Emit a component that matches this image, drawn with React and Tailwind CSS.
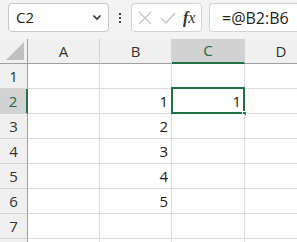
import React from "react";

const font = { fontFamily: '"Open Sans", "Liberation Sans", sans-serif' };

function Row({ n, b, c, selected }) {
  return (
    <div className="flex h-[25px]">
      <div
        className={
          "w-[28px] shrink-0 flex items-center justify-center text-[15px] border-b border-[#d4d4d4] " +
          (selected
            ? "bg-[#d2d2d2] text-[#1e6b3e] border-r-2 border-r-[#217346]"
            : "bg-[#f0f0f0] text-[#333] border-r border-r-[#9f9f9f]")
        }
      >
        {n}
      </div>
      <div className="w-[72px] shrink-0 border-r border-b border-[#dadada] bg-white" />
      <div className="w-[72px] shrink-0 border-r border-b border-[#dadada] bg-white flex items-center justify-end pr-[3px] text-[15px] text-[#222]">
        {b}
      </div>
      <div className="w-[73px] shrink-0 border-r border-b border-[#dadada] bg-white relative flex items-center justify-end pr-[3px] text-[15px] text-[#222]">
        {selected && (
          <>
            <div className="absolute left-[-1px] top-[-2px] w-[74px] h-[27px] border-2 border-[#217346]" />
            <div className="absolute right-[-3px] bottom-[-3px] w-[5px] h-[5px] bg-[#217346] border border-white" />
          </>
        )}
        <span className="relative">{c}</span>
      </div>
      <div className="w-[72px] shrink-0 border-b border-r border-[#dadada] bg-white" />
    </div>
  );
}

export default function App() {
  return (
    <div className="w-[297px] h-[242px] overflow-hidden bg-white" style={font}>
      <div className="h-[39px] bg-[#f3f3f3] flex items-start pt-[3px]">
        <div className="ml-[8px] w-[101px] h-[29px] bg-white border border-[#c9c9c9] rounded-[4px] flex items-center pl-[7px] pr-[6px] text-[15px] text-[#222]">
          <span className="flex-1">C2</span>
          <svg width="10" height="7" viewBox="0 0 10 7">
            <path d="M1.5 1.5 L5 5 L8.5 1.5" stroke="#333" strokeWidth="1.6" fill="none" />
          </svg>
        </div>
        <div className="w-[22px] h-[29px] flex flex-col items-center justify-center gap-[2px]">
          <div className="w-[2px] h-[2px] bg-[#444]" />
          <div className="w-[2px] h-[2px] bg-[#444]" />
          <div className="w-[2px] h-[2px] bg-[#444]" />
        </div>
        <div className="w-[71px] h-[29px] bg-white border border-[#d4d4d4] rounded-[4px] flex items-center pl-[5px]">
          <svg width="16" height="16" viewBox="0 0 16 16">
            <path d="M2 2 L14 14 M14 2 L2 14" stroke="#c4c4c4" strokeWidth="1.3" fill="none" />
          </svg>
          <svg width="18" height="16" viewBox="0 0 18 16" className="ml-[6px]">
            <path d="M2 8 L7 13 L16 3" stroke="#c4c4c4" strokeWidth="1.3" fill="none" />
          </svg>
          <span
            className="ml-[6px] text-[16px] italic text-[#333] leading-none"
            style={{ fontFamily: '"Liberation Serif", serif' }}
          >
            <span className="font-bold">f</span>x
          </span>
        </div>
        <div className="ml-[7px] flex-1 h-[29px] bg-white border border-[#d4d4d4] rounded-l-[4px] border-r-0 flex items-center pl-[12px] text-[16px] text-[#222]">
          =@B2:B6
        </div>
      </div>
      <div className="flex h-[25px]">
        <div className="w-[28px] shrink-0 bg-[#f0f0f0] border-r border-b border-[#9f9f9f] relative">
          <svg width="18" height="18" viewBox="0 0 18 18" className="absolute right-[3px] bottom-[3px]">
            <path d="M18 0 L18 18 L0 18 Z" fill="#c0c0c0" />
          </svg>
        </div>
        <div className="w-[72px] shrink-0 bg-[#f0f0f0] border-r border-[#d4d4d4] border-b border-b-[#9f9f9f] flex items-center justify-center text-[15px] text-[#333]">
          A
        </div>
        <div className="w-[72px] shrink-0 bg-[#f0f0f0] border-r border-[#d4d4d4] border-b border-b-[#9f9f9f] flex items-center justify-center text-[15px] text-[#333]">
          B
        </div>
        <div className="w-[73px] shrink-0 bg-[#d2d2d2] border-r border-[#d4d4d4] border-b-2 border-b-[#217346] flex items-center justify-center text-[15px] text-[#1e6b3e]">
          C
        </div>
        <div className="w-[72px] shrink-0 bg-[#f0f0f0] border-b border-b-[#9f9f9f] flex items-center justify-center text-[15px] text-[#333]">
          D
        </div>
      </div>
      <Row n="1" b="" c="" />
      <Row n="2" b="1" c="1" selected />
      <Row n="3" b="2" c="" />
      <Row n="4" b="3" c="" />
      <Row n="5" b="4" c="" />
      <Row n="6" b="5" c="" />
      <Row n="7" b="" c="" />
      <Row n="" b="" c="" />
    </div>
  );
}
